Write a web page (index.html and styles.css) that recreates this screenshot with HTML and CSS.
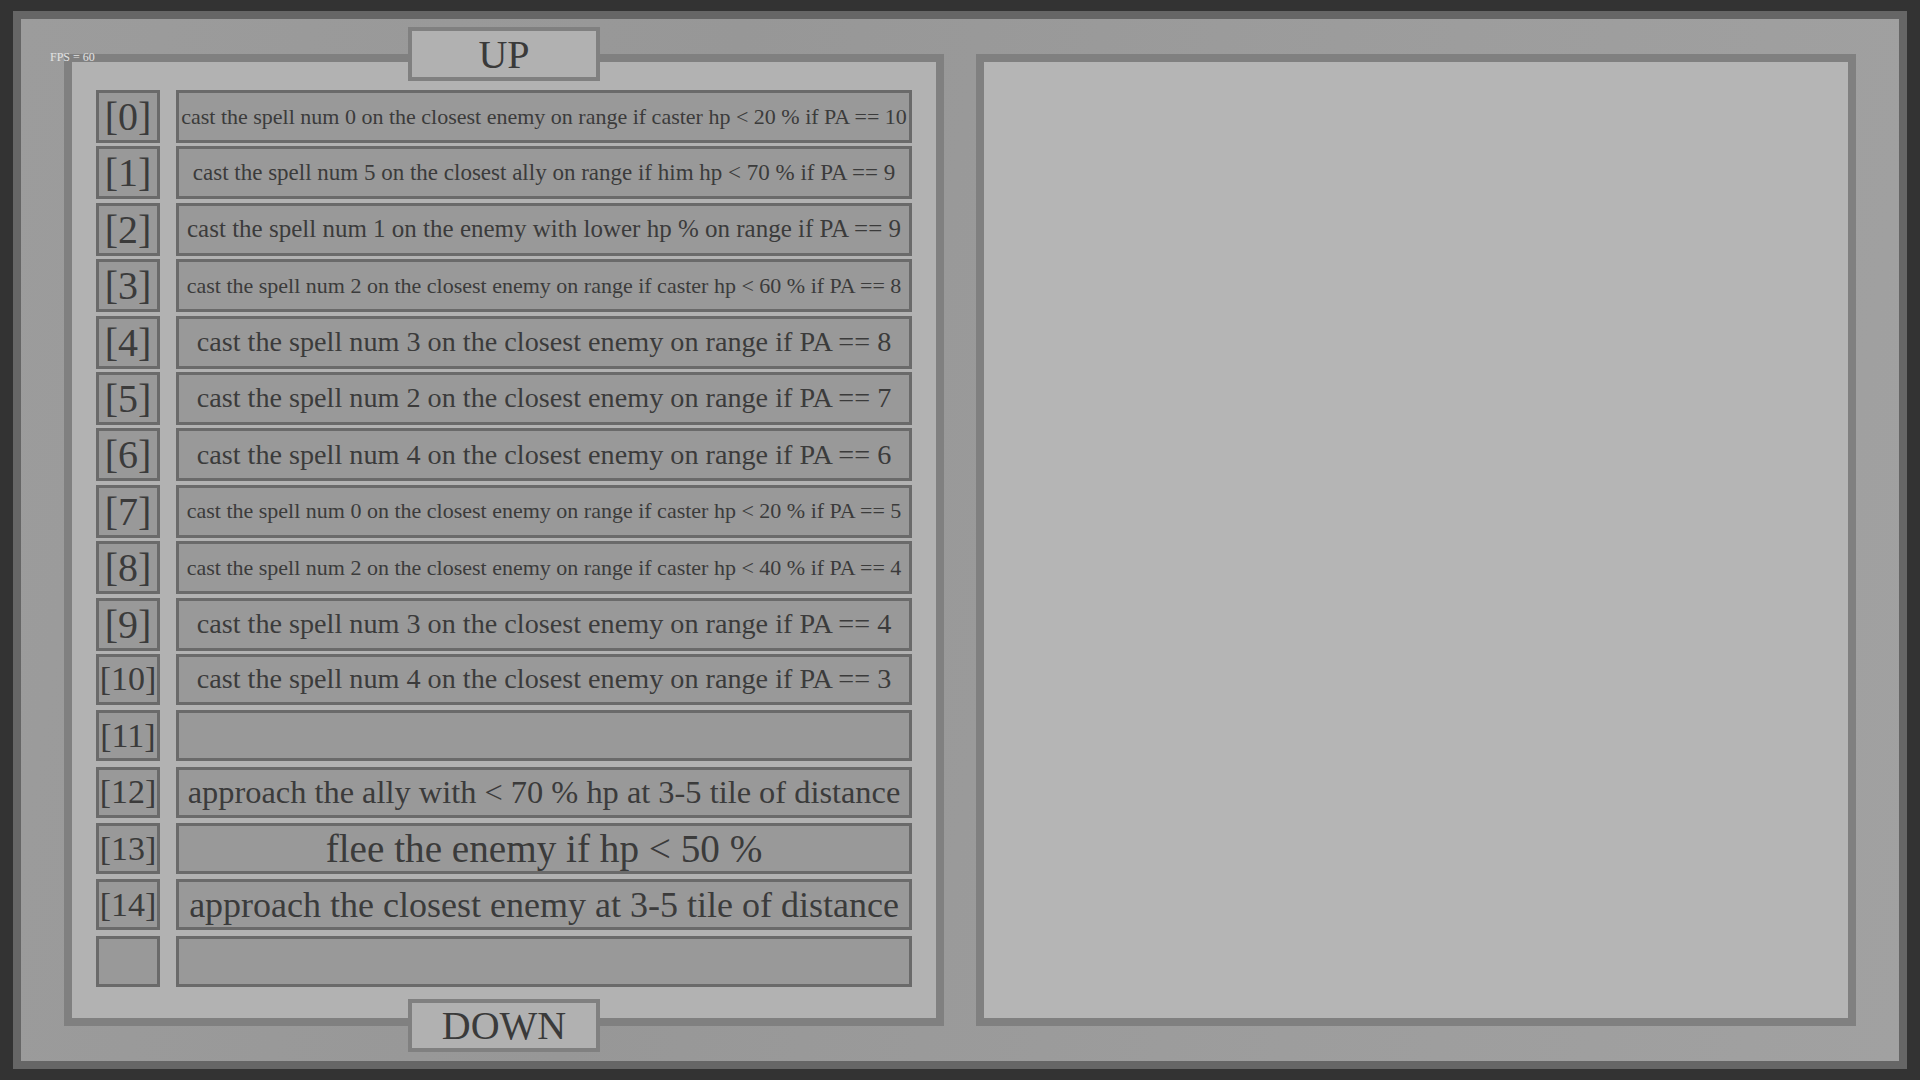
FILE: index.html
```html
<!DOCTYPE html>
<html lang="en">
<head>
<meta charset="utf-8">
<title>AI rules</title>
<link rel="stylesheet" href="styles.css">
</head>
<body>
<div class="frame">
  <div class="fps">FPS = 60</div>
  <section class="panel panel-left">
    <div class="nav-btn nav-up">UP</div>
    <div class="rows">
      <div class="row"><div class="idx">[0]</div><div class="rule fs22">cast the spell num 0 on the closest enemy on range if caster hp &lt; 20 % if PA == 10</div></div>
      <div class="row"><div class="idx">[1]</div><div class="rule fs23">cast the spell num 5 on the closest ally on range if him hp &lt; 70 % if PA == 9</div></div>
      <div class="row"><div class="idx">[2]</div><div class="rule fs25">cast the spell num 1 on the enemy with lower hp % on range if PA == 9</div></div>
      <div class="row"><div class="idx">[3]</div><div class="rule fs22">cast the spell num 2 on the closest enemy on range if caster hp &lt; 60 % if PA == 8</div></div>
      <div class="row"><div class="idx">[4]</div><div class="rule fs28">cast the spell num 3 on the closest enemy on range if PA == 8</div></div>
      <div class="row"><div class="idx">[5]</div><div class="rule fs28">cast the spell num 2 on the closest enemy on range if PA == 7</div></div>
      <div class="row"><div class="idx">[6]</div><div class="rule fs28">cast the spell num 4 on the closest enemy on range if PA == 6</div></div>
      <div class="row"><div class="idx">[7]</div><div class="rule fs22">cast the spell num 0 on the closest enemy on range if caster hp &lt; 20 % if PA == 5</div></div>
      <div class="row"><div class="idx">[8]</div><div class="rule fs22">cast the spell num 2 on the closest enemy on range if caster hp &lt; 40 % if PA == 4</div></div>
      <div class="row"><div class="idx">[9]</div><div class="rule fs28">cast the spell num 3 on the closest enemy on range if PA == 4</div></div>
      <div class="row"><div class="idx idx-2">[10]</div><div class="rule fs28">cast the spell num 4 on the closest enemy on range if PA == 3</div></div>
      <div class="row"><div class="idx idx-2">[11]</div><div class="rule"></div></div>
      <div class="row"><div class="idx idx-2">[12]</div><div class="rule fs32">approach the ally with &lt; 70 % hp at 3-5 tile of distance</div></div>
      <div class="row"><div class="idx idx-2">[13]</div><div class="rule fs39">flee the enemy if hp &lt; 50 %</div></div>
      <div class="row"><div class="idx idx-2">[14]</div><div class="rule fs36">approach the closest enemy at 3-5 tile of distance</div></div>
      <div class="row"><div class="idx"></div><div class="rule"></div></div>
    </div>
    <div class="nav-btn nav-down">DOWN</div>
  </section>
  <section class="panel panel-right"></section>
</div>
</body>
</html>
```

FILE: styles.css
```css
* { box-sizing: border-box; }

html, body {
  margin: 0;
  padding: 0;
  height: 100%;
}

body {
  background: #333333;
  font-family: "Liberation Serif", "Times New Roman", serif;
  color: #3b3b3b;
  overflow: hidden;
}

.frame {
  position: relative;
  margin: 11px 13px;
  height: 1058px;
  border: 8px solid #666666;
  background: linear-gradient(100deg, #9c9c9c 0%, #979797 35%, #9d9d9d 70%, #a1a1a1 100%);
  padding: 35px 43px;
  display: flex;
  gap: 32px;
}

.fps {
  position: absolute;
  left: 29px;
  top: 31px;
  font-size: 12px;
  line-height: 14px;
  color: #e2e2e2;
  z-index: 2;
  white-space: nowrap;
}

.panel {
  flex: none;
  width: 880px;
  position: relative;
  border: 8px solid #808080;
}

.panel-left {
  background: #b2b2b2;
  padding: 28px 24px 31px;
}

.panel-right {
  background: #b5b5b5;
}

.nav-btn {
  position: absolute;
  left: 50%;
  width: 192px;
  margin-left: -96px;
  height: 54px;
  border: 4px solid #808080;
  background: #b1b1b1;
  font-size: 40px;
  display: flex;
  align-items: center;
  justify-content: center;
  color: #3a3a3a;
}

.nav-up { top: -35px; }
.nav-down { bottom: -34px; height: 53px; }

.rows {
  display: flex;
  flex-direction: column;
  gap: 5.4px;
}

.row {
  display: grid;
  grid-template-columns: 64px 736px;
  column-gap: 16px;
  height: 51px;
}

.idx, .rule {
  border: 3px solid #6a6a6a;
  background: #999999;
  display: flex;
  align-items: center;
  justify-content: center;
  white-space: nowrap;
  overflow: visible;
}

.idx {
  font-size: 40px;
}

.idx-2 {
  font-size: 34px;
}

.fs22 { font-size: 22px; }
.fs23 { font-size: 23px; }
.fs25 { font-size: 25px; }
.fs28 { font-size: 28.2px; }
.fs32 { font-size: 32.4px; }
.fs36 { font-size: 36px; }
.fs39 { font-size: 39.2px; }
```
